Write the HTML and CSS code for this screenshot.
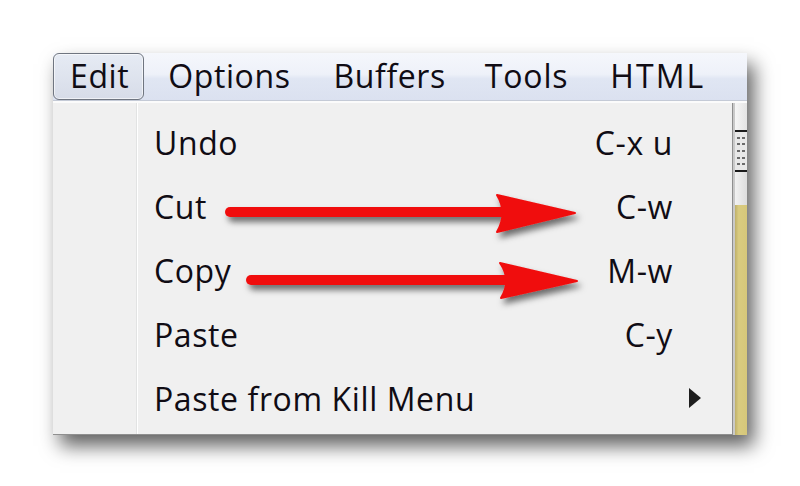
FILE: index.html
```html
<!DOCTYPE html>
<html>
<head>
<meta charset="utf-8">
<link rel="stylesheet" href="styles.css">
</head>
<body>
<div class="stage">
  <div class="window">
    <div class="menubar">
      <div class="mitem active">Edit</div>
      <div class="mitem">Options</div>
      <div class="mitem">Buffers</div>
      <div class="mitem">Tools</div>
      <div class="mitem">HTML</div>
    </div>
    <div class="body">
      <div class="menu">
        <div class="gutter"></div>
        <div class="items">
          <div class="row"><span class="label">Undo</span><span class="key">C-x u</span></div>
          <div class="row"><span class="label">Cut</span><span class="key">C-w</span></div>
          <div class="row"><span class="label">Copy</span><span class="key">M-w</span></div>
          <div class="row"><span class="label">Paste</span><span class="key">C-y</span></div>
          <div class="row"><span class="label">Paste from Kill Menu</span><span class="sub"></span></div>
        </div>
      </div>
      <div class="scroll">
        <div class="sc-top"></div>
        <div class="sc-thumb">
          <div class="grip"></div>
          <div class="grip"></div>
          <div class="grip"></div>
          <div class="grip"></div>
          <div class="grip"></div>
        </div>
        <div class="sc-mid"></div>
        <div class="sc-tan"></div>
      </div>
    </div>
  </div>
  <svg class="arrows" width="800" height="486" viewBox="0 0 800 486">
    <defs>
      <filter id="sh" x="-10%" y="-50%" width="130%" height="250%">
        <feDropShadow dx="3" dy="5" stdDeviation="3" flood-color="#000" flood-opacity="0.55"/>
      </filter>
    </defs>
    <g filter="url(#sh)" fill="#f00c0c" stroke="#f00c0c">
      <line x1="230" y1="212" x2="510" y2="212" stroke-width="10" stroke-linecap="round"/>
      <path d="M497 195 L575 213 L497 232 Q508 213 497 195 Z" stroke-width="2" stroke-linejoin="round"/>
      <line x1="251" y1="280" x2="512" y2="280" stroke-width="10" stroke-linecap="round"/>
      <path d="M500 263 L577 281 L501 298 Q512 280 500 263 Z" stroke-width="2" stroke-linejoin="round"/>
    </g>
  </svg>
</div>
</body>
</html>
```

FILE: styles.css
```css
html, body {
  margin: 0;
  padding: 0;
  background: #ffffff;
}

.stage {
  position: relative;
  width: 800px;
  height: 486px;
  box-sizing: border-box;
  padding: 53px 0 0 53px;
  overflow: hidden;
  font-family: "Open Sans", "Noto Sans", sans-serif;
  font-size: 32px;
  letter-spacing: 0.6px;
  color: #100c14;
}

.window {
  width: 694px;
  display: flex;
  flex-direction: column;
  box-shadow: 7px 11px 18px rgba(0, 0, 0, 0.62);
}

.menubar {
  height: 47px;
  display: flex;
  align-items: stretch;
  background: linear-gradient(to bottom, #f5f7fc 0%, #eef1f9 45%, #e0e6f3 55%, #dbe1f0 100%);
  border-bottom: 1px solid #c4cad6;
}

.mitem {
  display: flex;
  align-items: center;
  padding: 0 0 2px 0;
  line-height: 1;
}

.mitem.active {
  border: 1px solid #6f7580;
  border-radius: 6px;
  background: linear-gradient(to bottom, #e6ebf4, #d7dce8);
  box-shadow: inset 0 0 0 1px rgba(255, 255, 255, 0.6);
  padding: 0 14px 2px 16px;
  margin-right: 24px;
}

.menubar .mitem:nth-child(2) { margin-right: 43px; }
.menubar .mitem:nth-child(3) { margin-right: 39px; }
.menubar .mitem:nth-child(4) { margin-right: 42px; letter-spacing: 0.8px; }
.menubar .mitem:nth-child(5) { letter-spacing: 2.1px; }

.body {
  display: flex;
  height: 332px;
  border-top: 2px solid #fbfbfb;
}

.menu {
  width: 679px;
  display: flex;
  background: #f0f0f0;
  border-right: 1px solid #8f8f8f;
  border-bottom: 1px solid #8f8f8f;
}

.gutter {
  width: 83px;
  border-right: 1px solid #e2e3e3;
  box-shadow: 1px 0 0 #ffffff;
}

.items {
  flex: 1;
  padding: 8px 59px 0 17px;
}

.row {
  height: 64px;
  display: flex;
  align-items: center;
  justify-content: space-between;
  padding-bottom: 2px;
  box-sizing: border-box;
}

.sub {
  width: 0;
  height: 0;
  border-left: 12px solid #1e1e1e;
  border-top: 10px solid transparent;
  border-bottom: 10px solid transparent;
  margin-right: -28px;
}

.scroll {
  width: 12px;
  display: flex;
  flex-direction: column;
  border-left: 2px solid #c9c9c9;
  background: #ececec;
}

.sc-top {
  height: 27px;
  background: linear-gradient(to right, #f6f6f6, #e4e4e4);
}

.sc-thumb {
  height: 38px;
  border-top: 2px solid #1a1a1a;
  border-bottom: 2px solid #1a1a1a;
  display: flex;
  flex-direction: column;
  justify-content: space-evenly;
  background: #e8e8e8;
}

.grip {
  height: 2px;
  margin: 0 2px;
  background: repeating-linear-gradient(to right, #6a6a6a 0 3px, transparent 3px 5px);
}

.sc-mid {
  height: 33px;
  background: linear-gradient(to right, #f2f2f2, #dcdcdc);
}

.sc-tan {
  flex: 1;
  background: linear-gradient(to right, #bfb06a, #d9cb80 30%, #d6c77a);
}

.arrows {
  position: absolute;
  left: 0;
  top: 0;
}
```
